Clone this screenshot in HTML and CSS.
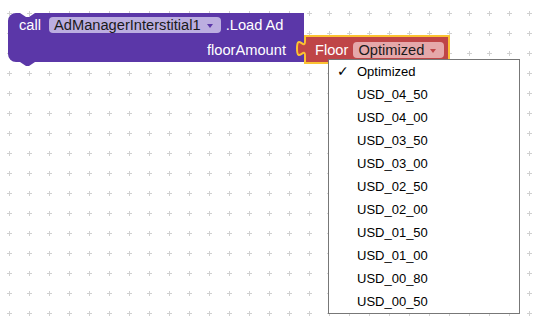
FILE: index.html
```html
<!DOCTYPE html>
<html lang="en">
<head>
    <meta charset="UTF-8">
    <title>Blocks Editor</title>
    <link rel="stylesheet" href="styles.css">
</head>
<body>

    <div class="workspace">
        <!-- grid of little crosses behind the blocks -->
        <svg class="grid" width="533" height="328">
            <defs>
                <pattern id="cross" x="-1" y="3" width="20" height="20" patternUnits="userSpaceOnUse">
                    <rect x="8" y="10" width="5" height="1" fill="#d0d0d0"/>
                    <rect x="10" y="8" width="1" height="5" fill="#d0d0d0"/>
                </pattern>
            </defs>
            <rect width="533" height="328" fill="url(#cross)"/>
        </svg>

        <!-- call block -->
        <div class="block call-block">
            <svg class="block-shape" width="296" height="53">
                <path d="M0,8 A8,8 0 0 1 8,0 H12 l6,4 h3 l6,-4 H296 V49 H27 l-6,4 h-3 l-6,-4 H8 A8,8 0 0 1 0,41 Z" fill="#5b37a8"/>
            </svg>
            <div class="row row-top">
                <span class="label">call</span>
                <span class="field field-purple">AdManagerInterstitial1<i class="arrow"></i></span>
                <span class="label load">.Load Ad</span>
            </div>
            <div class="row row-input">
                <span class="label">floorAmount</span>
            </div>
        </div>

        <!-- floor value block (selected) -->
        <div class="block floor-block">
            <svg class="block-shape" width="157" height="32">
                <path d="M10,2 V7 c0,10 -8,-8 -8,7.5 s8,-2.5 8,7.5 V29 H154 V2 Z" fill="#bf4547" stroke="#fbc232" stroke-width="2"/>
            </svg>
            <div class="row row-floor">
                <span class="label">Floor</span>
                <span class="field field-red">Optimized<i class="arrow"></i></span>
            </div>
        </div>

        <!-- open dropdown menu -->
        <div class="menu">
            <div class="menu-item checked">Optimized</div>
            <div class="menu-item">USD_04_50</div>
            <div class="menu-item">USD_04_00</div>
            <div class="menu-item">USD_03_50</div>
            <div class="menu-item">USD_03_00</div>
            <div class="menu-item">USD_02_50</div>
            <div class="menu-item">USD_02_00</div>
            <div class="menu-item">USD_01_50</div>
            <div class="menu-item">USD_01_00</div>
            <div class="menu-item">USD_00_80</div>
            <div class="menu-item">USD_00_50</div>
        </div>
    </div>

</body>
</html>
```

FILE: styles.css
```css
* {
    margin: 0;
    padding: 0;
    box-sizing: border-box;
}

body {
    font-family: "Liberation Sans", Arial, sans-serif;
    background: #fff;
    overflow: hidden;
}

/* Workspace */
.workspace {
    position: relative;
    width: 533px;
    height: 328px;
}

.grid {
    position: absolute;
    top: 0;
    left: 0;
}

/* Blocks */
.block {
    position: absolute;
    color: #fff;
    font-size: 14.67px;
}

.block-shape {
    position: absolute;
    top: 0;
    left: 0;
    overflow: visible;
}

.row {
    position: relative;
    display: flex;
    align-items: center;
    white-space: nowrap;
}

.call-block {
    left: 8px;
    top: 13px;
    width: 296px;
    height: 49px;
}

.row-top {
    height: 24px;
    padding-left: 11px;
}

.row-input {
    height: 25px;
    justify-content: flex-end;
    padding-right: 18px;
}

.floor-block {
    left: 295px;
    top: 34px;
    width: 157px;
    height: 32px;
    z-index: 2;
}

.row-floor {
    height: 32px;
    padding-left: 20px;
}

/* Dropdown fields */
.field {
    display: flex;
    align-items: center;
    height: 16px;
    padding: 0 8px 0 5px;
    border-radius: 4px;
    color: #1a1a1a;
}

.field-purple {
    background: #bcaee0;
    margin: 0 5px 0 8px;
}

.field-red {
    background: #e5a8aa;
    margin-left: 5px;
}

.arrow {
    margin-left: 6px;
    width: 0;
    height: 0;
    border-left: 3.5px solid transparent;
    border-right: 3.5px solid transparent;
    border-top: 4px solid #5b37a8;
    margin-top: 1px;
}

.field-red .arrow {
    border-top-color: #bf4547;
}

/* Menu */
.menu {
    position: absolute;
    left: 328px;
    top: 59px;
    width: 192px;
    background: #fff;
    border: 1px solid #777;
    z-index: 3;
}

.menu-item {
    position: relative;
    height: 23px;
    line-height: 23px;
    padding-left: 28px;
    font-size: 13px;
    color: #000;
}

.menu-item.checked::before {
    content: "\2713";
    position: absolute;
    left: 8px;
    top: 0;
    font-family: "DejaVu Sans", sans-serif;
    font-size: 14px;
}
```
